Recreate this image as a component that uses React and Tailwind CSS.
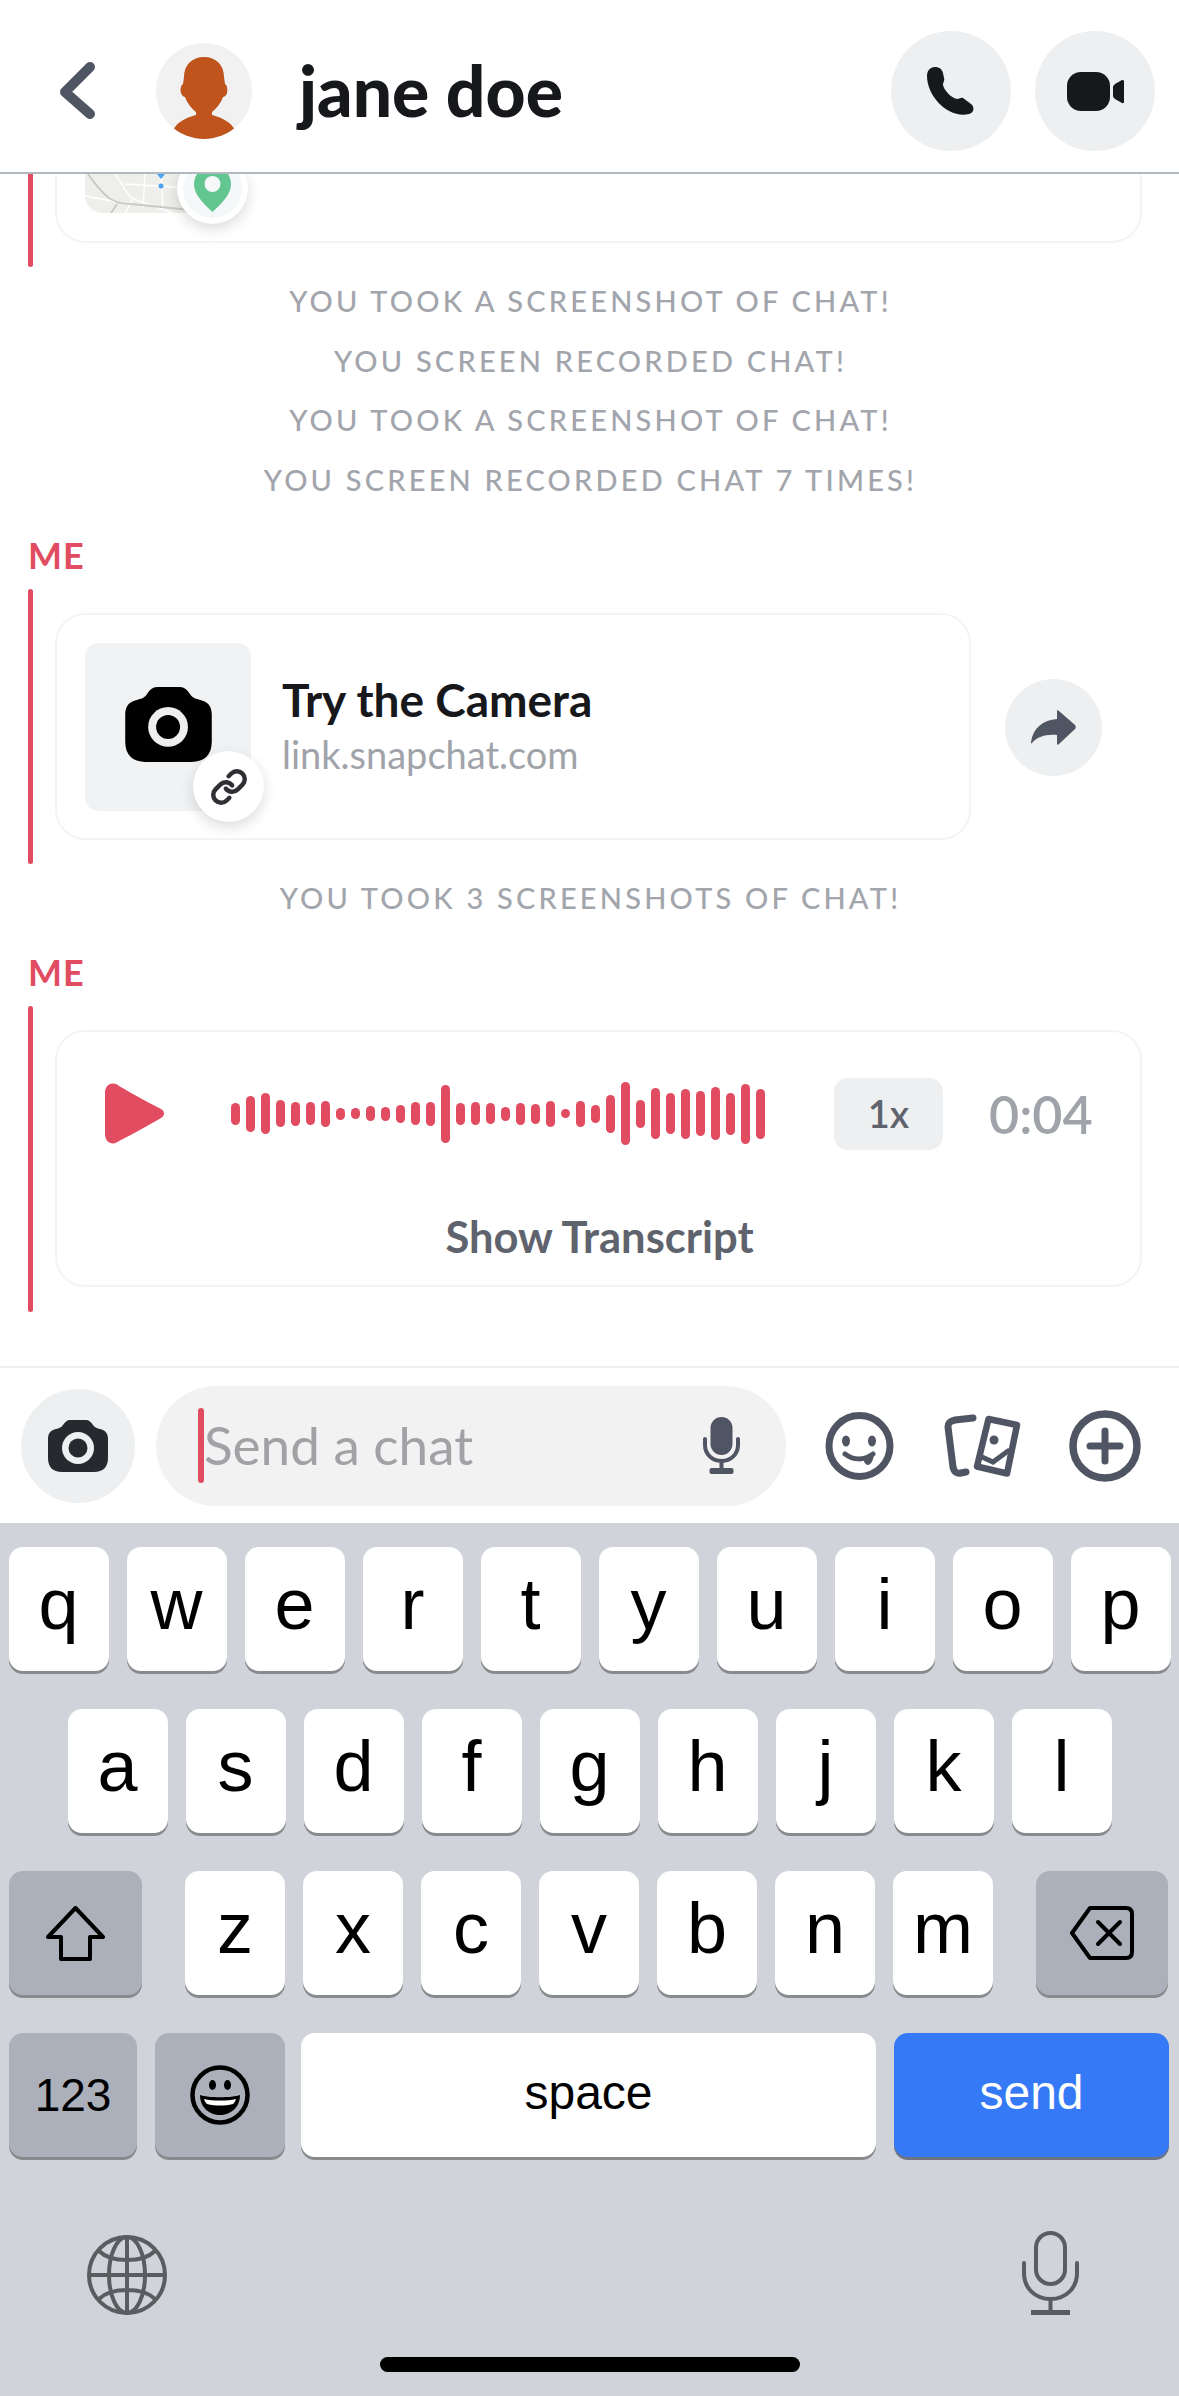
import { Link } from 'lucide-react';

const WAVE = [22, 36, 41, 27, 24, 23, 26, 12, 11, 15, 14, 18, 23, 24, 58, 22, 23, 21, 14, 22, 20, 26, 9, 26, 18, 38, 63, 28, 51, 41, 50, 45, 53, 42, 60, 50];

function CameraIcon({ className, fill, ring, cx, cy, outer, inner }) {
    return (
        <svg viewBox="0 0 60 52" className={className}>
            <path fill={fill} d="M22 0 H38 C41 0 43 2 45 5 C47 8 49 8 52 9 C57 10 60 13 60 19 V38 C60 47 55 52 46 52 H14 C5 52 0 47 0 38 V19 C0 13 3 10 8 9 C11 8 13 8 15 5 C17 2 19 0 22 0Z" />
            <circle cx={cx} cy={cy} r={outer} fill={ring} />
            <circle cx={cx} cy={cy} r={inner} fill={fill} />
        </svg>
    );
}

function Header() {
    return (
        <div className="h-[174px] shrink-0 border-b-2 border-[#b0b8c0] flex items-center bg-white">
            <div className="flex items-center h-full pt-[10px]">
                <svg viewBox="0 0 40 60" className="w-[40px] h-[60px] ml-[58px]">
                    <path d="M32 7 L7 32 L32 54" transform="translate(0 -1)" fill="none" stroke="#4f5562" strokeWidth="10" strokeLinecap="round" strokeLinejoin="round" />
                </svg>
                <div className="w-[96px] h-[96px] ml-[58px] rounded-full bg-[#f1f1f1] overflow-hidden">
                    <svg viewBox="0 0 96 96" className="w-full h-full">
                        <path fill="#bf551d" d="M48 14 C36 14 28 22 28 34 L27 41 C25 42 24 46 25 50 C26 53 28 54 29 54 C31 60 36 66 40 69 L40 72 C33 74 24 77 19 84 L10 96 L86 96 L77 84 C72 77 63 74 56 72 L56 69 C60 66 65 60 67 54 C68 54 70 53 71 50 C72 46 71 42 69 41 L68 34 C68 22 60 14 48 14Z" />
                    </svg>
                </div>
                <span className="ml-[47px] text-[69.5px] leading-none font-black text-[#16181c] font-['Lato',sans-serif]">jane doe</span>
            </div>
            <div className="ml-auto mr-[24px] mt-[10px] flex items-center gap-[24px]">
                <button className="w-[120px] h-[120px] rounded-full bg-[#eeeff0] flex items-center justify-center">
                    <svg viewBox="0 0 48 48" className="w-[48px] h-[48px]">
                        <path fill="#16181c" d="M8 0 C12 0 15 2 16 6 L17 11 C18 14 16 15 16 18 C17 23 24 31 30 32 C32 32 34 30 36 31 L44 37 C48 40 47 46 42 47 C22 52 0 30 0 9 C0 3 4 0 8 0Z" />
                    </svg>
                </button>
                <button className="w-[120px] h-[120px] rounded-full bg-[#eeeff0] flex items-center justify-center">
                    <svg viewBox="0 0 57 39" className="w-[57px] h-[39px]">
                        <rect width="43" height="39" rx="14" fill="#16181c" />
                        <path fill="#16181c" d="M46 15 C46 14 47 13 48 12 L55 8 C56 8 57 8.5 57 9 V30 C57 31 56 31.5 55 31 L48 27 C47 26 46 25 46 24Z" />
                    </svg>
                </button>
            </div>
        </div>
    );
}

function SystemLine({ children }) {
    return (
        <div className="h-[59.5px] flex items-center justify-center text-[29px] font-medium tracking-[3.2px] text-[#a2a5ab] whitespace-nowrap pl-[2px]">
            {children}
        </div>
    );
}

function SenderLabel({ className = '' }) {
    return <div className={`h-[40px] ml-[28px] flex items-center text-[36px] font-bold tracking-[1px] text-[#e14c60] ${className}`}>ME</div>;
}

function MapThumb() {
    return (
        <div className="relative w-[106px] h-[39px] ml-[30px]">
            <svg viewBox="0 0 106 39" className="w-full h-full rounded-bl-[18px]">
                <rect width="106" height="39" fill="#eeeeeb" />
                <path d="M30 0 L46 24 L90 40 M40 40 L47 26 M0 22 L32 28 M60 0 L58 34 M76 0 L78 36 M40 10 L104 14" fill="none" stroke="#fff" strokeWidth="1.5" />
                <path d="M3 0 C10 10 16 18 24 24 C30 28 36 30 46 30 L106 36 M26 39 L32 30" fill="none" stroke="#c9c9c7" strokeWidth="2" />
                <path d="M72 0 H80 L76 5Z" fill="#4aa3f0" />
                <circle cx="76" cy="12" r="2.5" fill="#4aa3f0" />
            </svg>
            <div className="absolute left-[92px] -top-[21px] w-[71px] h-[71px] rounded-full bg-white shadow-[0_5px_14px_rgba(0,0,0,0.14)] flex items-start justify-center">
                <div className="w-[59px] h-[59px] mt-[6px] rounded-full bg-[#f5f8f9] flex justify-center">
                    <svg viewBox="0 0 37 46" className="w-[37px] h-[46px] mt-[7px]">
                        <path fill="#63c58f" d="M18.5 0 C29 0 37 8 37 18.5 C37 29 26 39 18.5 46 C11 39 0 29 0 18.5 C0 8 8 0 18.5 0Z" />
                        <circle cx="18.5" cy="18" r="8" fill="#f5f8f9" />
                    </svg>
                </div>
            </div>
        </div>
    );
}

function LinkCard() {
    return (
        <div className="flex ml-[28px]">
            <div className="w-[5px] rounded-full bg-[#e14c60] h-[275px]" />
            <div className="w-[916px] h-[227px] ml-[22px] mt-[24px] rounded-[30px] border-2 border-[#f4f4f4] flex">
                <div className="relative w-[166px] h-[168px] ml-[28px] mt-[28px] rounded-[14px] bg-[#f1f2f3] flex justify-center pt-[44px]">
                    <CameraIcon className="w-[87px] h-[75px]" fill="#000" ring="#eeeeee" cx="29.7" cy="27.7" outer="13.8" inner="8.3" />
                    <div className="absolute left-[108px] top-[108px] w-[71px] h-[71px] rounded-full bg-white shadow-[0_5px_14px_rgba(0,0,0,0.14)] flex items-center justify-center">
                        <Link className="w-[38px] h-[38px] text-[#2d2f33]" strokeWidth={2.8} />
                    </div>
                </div>
                <div className="ml-[31px] mt-[57px] flex flex-col">
                    <span className="h-[56px] leading-[56px] text-[46px] font-bold text-[#16181c]">Try the Camera</span>
                    <span className="h-[44px] leading-[44px] mt-[4px] text-[38px] text-[#a0a3a9]">link.snapchat.com</span>
                </div>
            </div>
            <button className="w-[97px] h-[97px] ml-[34px] mt-[90px] rounded-full bg-[#eeeff0] flex items-center justify-center">
                <svg viewBox="0 0 45 35" className="w-[45px] h-[35px]">
                    <path fill="#4f5562" d="M26 1 C26 0 27 0 28 1 L44 15 C45 16 45 18 44 19 L28 34 C27 35 26 35 26 34 V25 C14 24 6 27 1 33 C0 34 0 33 0 32 C2 18 12 10 26 9Z" />
                </svg>
            </button>
        </div>
    );
}

function VoiceCard() {
    return (
        <div className="flex ml-[28px]">
            <div className="w-[5px] rounded-full bg-[#e14c60] h-[306px]" />
            <div className="w-[1087px] h-[257px] ml-[22px] mt-[24px] rounded-[30px] border-2 border-[#f4f4f4] flex flex-col">
                <div className="flex items-center h-[72px] mt-[46px]">
                    <svg viewBox="0 0 60 61" className="w-[60px] h-[61px] ml-[48px]">
                        <path fill="#e14c60" d="M0 10 C0 1 8 -2 14 3 C28 11 44 20 56 26 C60 28 60 33 56 35 C44 42 28 51 14 58 C8 63 0 60 0 51Z" />
                    </svg>
                    <div className="flex items-center gap-[6px] ml-[66px]">
                        {WAVE.map((h, i) => (
                            <div key={i} className="w-[9px] rounded-full bg-[#e14c60]" style={{ height: `${h}px` }} />
                        ))}
                    </div>
                    <div className="w-[109px] h-[72px] ml-[69px] rounded-[14px] bg-[#eeeff0] flex items-center justify-center text-[38px] font-semibold text-[#5f636d]">1x</div>
                    <span className="ml-[46px] text-[52px] font-semibold text-[#a0a3a9]">0:04</span>
                </div>
                <div className="h-[48px] mt-[63px] flex items-center justify-center text-[43.5px] font-bold text-[#5f636d] pl-[2px]">Show Transcript</div>
            </div>
        </div>
    );
}

function ChatInput() {
    return (
        <div className="h-[157px] shrink-0 border-t-2 border-[#eeeeee] bg-white flex items-center">
            <button className="w-[114px] h-[114px] ml-[21px] rounded-full bg-[#eeeff0] flex items-center justify-center">
                <CameraIcon className="w-[60px] h-[52px]" fill="#26292e" ring="#eeeff0" cx="30" cy="28" outer="16" inner="9.5" />
            </button>
            <div className="w-[630px] h-[120px] ml-[21px] rounded-full bg-[#f2f2f2] flex items-center">
                <div className="w-[6px] h-[75px] ml-[42px] rounded-full bg-[#e14c60]" />
                <span className="text-[53px] leading-none text-[#a0a2a6] pb-[3px]">Send a chat</span>
                <svg viewBox="0 0 37 57" className="w-[37px] h-[57px] ml-auto mr-[46px]">
                    <rect x="7.5" width="22" height="38" rx="11" fill="#4f5562" />
                    <path d="M2 22 V28 C2 37 9 44 18.5 44 C28 44 35 37 35 28 V22" fill="none" stroke="#4f5562" strokeWidth="4" strokeLinecap="round" />
                    <path d="M18.5 44 V54" stroke="#4f5562" strokeWidth="4" />
                    <rect x="6.5" y="51" width="24" height="6" rx="2" fill="#4f5562" />
                </svg>
            </div>
            <svg viewBox="0 0 69 68" className="w-[69px] h-[68px] ml-[39px]">
                <circle cx="34.5" cy="34" r="30.5" fill="none" stroke="#4f5562" strokeWidth="7" />
                <ellipse cx="21" cy="29" rx="4" ry="5.5" fill="#4f5562" />
                <ellipse cx="47" cy="29" rx="4" ry="5.5" fill="#4f5562" />
                <path d="M20 42 C28 48 38 49 48 42" fill="none" stroke="#4f5562" strokeWidth="5" strokeLinecap="round" />
                <path d="M38 46 L49 40 C49 46 47 52 43 53 C40 53 39 50 38 46Z" fill="#4f5562" />
            </svg>
            <svg viewBox="133 15 79 67" className="w-[79px] h-[67px] ml-[49px]">
                <path d="M163 21 L145 23 C140 24 138 26 138 30 L143 70 C144 75 147 77 151 76 L156 75" fill="none" stroke="#4f5562" strokeWidth="7" strokeLinecap="round" />
                <polygon points="178.5,22 207,28 197,76.5 167,69.5" fill="none" stroke="#4f5562" strokeWidth="6.5" strokeLinejoin="round" />
                <circle cx="184" cy="43" r="4.5" fill="#4f5562" />
                <path d="M172 60 L183 65 L198 54" fill="none" stroke="#4f5562" strokeWidth="5" strokeLinecap="round" />
            </svg>
            <svg viewBox="0 0 72 72" className="w-[72px] h-[72px] ml-[47px]">
                <circle cx="36" cy="36" r="32" fill="none" stroke="#4f5562" strokeWidth="7.5" />
                <path d="M21 36 H51 M36 21 V51" stroke="#4f5562" strokeWidth="7" strokeLinecap="round" />
            </svg>
        </div>
    );
}

function Key({ label, className = 'w-[100px]' }) {
    return (
        <div className={`h-[124px] rounded-[14px] bg-white shadow-[0_3px_0_#898a8d] flex items-center justify-center pb-[10px] text-[72px] leading-none text-black ${className}`}>
            {label}
        </div>
    );
}

function SpecialKey({ children, className = '' }) {
    return <div className={`h-[124px] rounded-[14px] bg-[#abb0bb] shadow-[0_3px_0_#898a8d] flex items-center justify-center ${className}`}>{children}</div>;
}

function Keyboard() {
    return (
        <div className="flex-1 bg-[#d1d3da] pt-[24px] font-['Liberation_Sans',sans-serif]">
            <div className="flex justify-center gap-[18px]">
                {['q', 'w', 'e', 'r', 't', 'y', 'u', 'i', 'o', 'p'].map((k) => <Key key={k} label={k} />)}
            </div>
            <div className="flex justify-center gap-[18px] mt-[38px]">
                {['a', 's', 'd', 'f', 'g', 'h', 'j', 'k', 'l'].map((k) => <Key key={k} label={k} />)}
            </div>
            <div className="flex items-center px-[9px] mt-[38px]">
                <SpecialKey className="w-[133px]">
                    <svg viewBox="0 0 61 55" className="w-[61px] h-[55px]">
                        <path d="M30.5 2 L58 31 H45 V53 H16 V31 H3Z" fill="none" stroke="#000" strokeWidth="4" strokeLinejoin="round" />
                    </svg>
                </SpecialKey>
                <div className="flex gap-[18px] ml-[43px]">
                    {['z', 'x', 'c', 'v', 'b', 'n', 'm'].map((k) => <Key key={k} label={k} />)}
                </div>
                <SpecialKey className="w-[132px] ml-[43px]">
                    <svg viewBox="0 0 64 54" className="w-[64px] h-[54px]">
                        <path d="M20 2 H56 C60 2 62 4 62 8 V46 C62 50 60 52 56 52 H20 L2 27Z" fill="none" stroke="#000" strokeWidth="4" strokeLinejoin="round" />
                        <path d="M28 16 L50 38 M50 16 L28 38" stroke="#000" strokeWidth="4" strokeLinecap="round" />
                    </svg>
                </SpecialKey>
            </div>
            <div className="flex items-center pl-[9px] mt-[38px]">
                <SpecialKey className="w-[128px] text-[46px] text-black">123</SpecialKey>
                <SpecialKey className="w-[130px] ml-[18px]">
                    <svg viewBox="0 0 60 60" className="w-[60px] h-[60px]">
                        <circle cx="30" cy="30" r="27.5" fill="none" stroke="#000" strokeWidth="4.5" />
                        <ellipse cx="22.5" cy="20" rx="3.5" ry="5" fill="#000" />
                        <ellipse cx="37.5" cy="20" rx="3.5" ry="5" fill="#000" />
                        <path d="M10 30 C18 33 42 33 50 30 C50 43 40 50 30 50 C20 50 10 43 10 30Z" fill="#000" />
                        <path d="M14 34 C22 36 38 36 46 34 C45 37 44 38 43 39 C34 41 26 41 17 39 C16 38 15 37 14 34Z" fill="#fff" />
                    </svg>
                </SpecialKey>
                <div className="w-[575px] h-[124px] ml-[16px] rounded-[14px] bg-white shadow-[0_3px_0_#898a8d] flex items-center justify-center pb-[4px] text-[48px] text-black">space</div>
                <div className="w-[275px] h-[124px] ml-[18px] rounded-[14px] bg-[#3579f6] shadow-[0_3px_0_#6d7484] flex items-center justify-center pb-[4px] text-[48px] text-white">send</div>
            </div>
            <div className="flex items-end justify-between pl-[87px] pr-[100px] mt-[74px]">
                <svg viewBox="0 0 80 80" className="w-[80px] h-[80px]" fill="none" stroke="#5a5c60" strokeWidth="4">
                    <circle cx="40" cy="40" r="38" />
                    <ellipse cx="40" cy="40" rx="18" ry="38" />
                    <path d="M40 2 V78 M2 40 H78 M12 16 C24 28 56 28 68 16 M12 64 C24 52 56 52 68 64" />
                </svg>
                <svg viewBox="0 0 57 84" className="w-[57px] h-[84px]" fill="none" stroke="#5a5c60" strokeWidth="4">
                    <rect x="14" y="2" width="29" height="51" rx="14.5" />
                    <path d="M2 32 V42 C2 57 13 68 28.5 68 C44 68 55 57 55 42 V32" strokeLinecap="round" />
                    <path d="M28.5 68 V80" />
                    <rect x="9" y="79" width="39" height="5" fill="#5a5c60" stroke="none" />
                </svg>
            </div>
            <div className="w-[420px] h-[15px] mt-[42px] mx-auto rounded-full bg-black" />
        </div>
    );
}

export default function App() {
    return (
        <div className="w-[1179px] h-[2396px] flex flex-col bg-white overflow-hidden font-['Lato',sans-serif]">
            <Header />
            <div className="h-[1192px] shrink-0 overflow-hidden flex flex-col">
                <div className="flex ml-[28px]">
                    <div className="w-[5px] rounded-b-full bg-[#e14c60] h-[93px]" />
                    <div className="w-[1087px] h-[69px] ml-[22px] rounded-b-[30px] border-2 border-t-0 border-[#f4f4f4]">
                        <div className="-ml-[2px]"><MapThumb /></div>
                    </div>
                </div>
                <div className="mt-[4px]">
                    <SystemLine>YOU TOOK A SCREENSHOT OF CHAT!</SystemLine>
                    <SystemLine>YOU SCREEN RECORDED CHAT!</SystemLine>
                    <SystemLine>YOU TOOK A SCREENSHOT OF CHAT!</SystemLine>
                    <SystemLine>YOU SCREEN RECORDED CHAT 7 TIMES!</SystemLine>
                </div>
                <SenderLabel className="mt-[26px] mb-[14px]" />
                <LinkCard />
                <div className="mt-[4px]"><SystemLine>YOU TOOK 3 SCREENSHOTS OF CHAT!</SystemLine></div>
                <SenderLabel className="mt-[24px] mb-[14px]" />
                <VoiceCard />
            </div>
            <ChatInput />
            <Keyboard />
        </div>
    );
}
